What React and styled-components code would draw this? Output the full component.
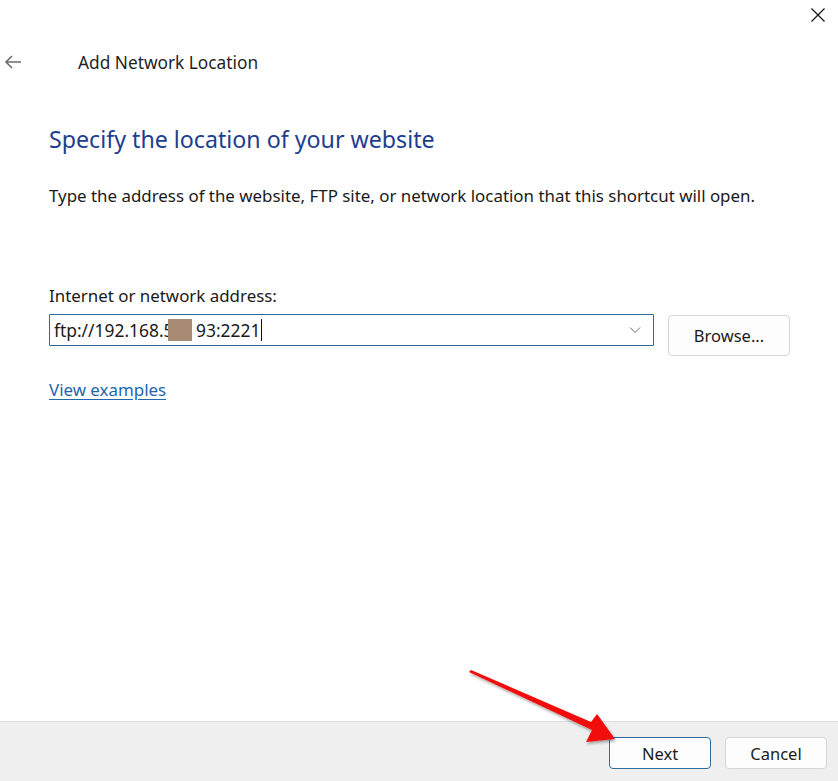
import React from "react";
import styled, { createGlobalStyle } from "styled-components";

const GlobalStyle = createGlobalStyle`
  html, body {
    margin: 0;
    padding: 0;
    background: #fff;
  }
  body {
    font-family: "Noto Sans", "Open Sans", sans-serif;
    color: #1a1a1a;
  }
`;

const Window = styled.div`
  position: relative;
  width: 838px;
  height: 781px;
  display: flex;
  flex-direction: column;
  background: #fff;
  overflow: hidden;
`;

const CaptionBar = styled.div`
  height: 30px;
  display: flex;
  justify-content: flex-end;
  align-items: flex-start;
`;

const CloseButton = styled.button`
  width: 46px;
  height: 30px;
  border: 0;
  background: transparent;
  display: flex;
  align-items: center;
  justify-content: center;
  padding: 0 0 0 6px;
  color: #1a1a1a;
`;

const Header = styled.div`
  display: flex;
  align-items: center;
  height: 64px;
`;

const BackButton = styled.button`
  width: 78px;
  height: 32px;
  border: 0;
  background: transparent;
  display: flex;
  align-items: center;
  padding: 0 0 0 4px;
  color: #6b6b6b;
`;

const HeaderTitle = styled.div`
  font-size: 17.3px;
  color: #1f1f1f;
`;

const Content = styled.div`
  flex: 1;
  padding: 28px 40px 0 49px;
  display: flex;
  flex-direction: column;
`;

const Heading = styled.h1`
  margin: 0;
  font-size: 23.2px;
  font-weight: 400;
  color: #1d3e8f;
  line-height: 34px;
`;

const Description = styled.p`
  margin: 28px 0 0;
  font-size: 16.9px;
  line-height: 24px;
  white-space: nowrap;
`;

const FieldLabel = styled.label`
  margin-top: 76px;
  font-size: 16.9px;
  line-height: 24px;
`;

const FieldRow = styled.div`
  margin-top: 6px;
  display: flex;
  align-items: flex-start;
  gap: 14px;
`;

const ComboBox = styled.div`
  width: 605px;
  height: 32px;
  box-sizing: border-box;
  border: 1px solid #2d6a98;
  border-radius: 1px;
  display: flex;
  align-items: center;
  padding: 0 12px 0 4px;
  font-size: 17.4px;
`;

const ComboText = styled.div`
  flex: 1;
  display: flex;
  align-items: center;
  white-space: pre;
`;

const Redaction = styled.span`
  display: inline-block;
  width: 24px;
  height: 22px;
  margin-left: -6px;
  background: #a88b73;
`;

const Caret = styled.span`
  display: inline-block;
  width: 1px;
  height: 22px;
  margin-left: 1px;
  background: #111;
`;

const PushButton = styled.button`
  width: ${(p) => p.$width || 102}px;
  height: ${(p) => p.$height || 32}px;
  box-sizing: border-box;
  background: #fdfdfd;
  border: 1px solid ${(p) => (p.$primary ? "#2f6e9c" : "#d6d6d6")};
  border-radius: 4px;
  font-family: inherit;
  font-size: 16.5px;
  color: #1b1b1b;
  padding: 0;
  margin-top: ${(p) => p.$offset || 0}px;
`;

const LinkText = styled.a`
  margin-top: 22px;
  align-self: flex-start;
  font-size: 16.9px;
  line-height: 24px;
  color: #2266b0;
  text-decoration: underline;
  text-underline-offset: 3px;
`;

const Footer = styled.div`
  height: 60px;
  box-sizing: border-box;
  background: #efefef;
  border-top: 1px solid #dcdcdc;
  display: flex;
  justify-content: flex-end;
  align-items: center;
  gap: 14px;
  padding: 3px 11px 0 0;
`;

const Annotation = styled.svg`
  position: absolute;
  left: 460px;
  top: 660px;
  pointer-events: none;
`;

export default function App() {
  return (
    <>
      <GlobalStyle />
      <Window>
        <CaptionBar>
          <CloseButton aria-label="Close">
            <svg width="16" height="16" viewBox="0 0 16 16">
              <path d="M1.5 1.5 L14.5 14.5 M14.5 1.5 L1.5 14.5" stroke="#1a1a1a" strokeWidth="1.3" />
            </svg>
          </CloseButton>
        </CaptionBar>
        <Header>
          <BackButton aria-label="Back">
            <svg width="18" height="16" viewBox="0 0 18 16">
              <path d="M17 8 H2 M8 2 L2 8 L8 14" stroke="#6e6e6e" strokeWidth="1.6" fill="none" />
            </svg>
          </BackButton>
          <HeaderTitle>Add Network Location</HeaderTitle>
        </Header>
        <Content>
          <Heading>Specify the location of your website</Heading>
          <Description>
            Type the address of the website, FTP site, or network location that this shortcut will open.
          </Description>
          <FieldLabel>Internet or network address:</FieldLabel>
          <FieldRow>
            <ComboBox>
              <ComboText>
                ftp://192.168.5<Redaction /> 93:2221<Caret />
              </ComboText>
              <svg width="12" height="8" viewBox="0 0 12 8">
                <path d="M1 1.5 L6 6.5 L11 1.5" stroke="#6a6a6a" strokeWidth="1" fill="none" />
              </svg>
            </ComboBox>
            <PushButton $width={122} $height={41} $offset={1}>
              Browse...
            </PushButton>
          </FieldRow>
          <LinkText href="#">View examples</LinkText>
        </Content>
        <Footer>
          <PushButton $primary>Next</PushButton>
          <PushButton>Cancel</PushButton>
        </Footer>
        <Annotation width="170" height="100" viewBox="0 0 170 100">
          <defs>
            <filter id="shade" x="-10%" y="-10%" width="130%" height="140%">
              <feDropShadow dx="1" dy="2" stdDeviation="1.5" floodColor="#000" floodOpacity="0.35" />
            </filter>
          </defs>
          <path
            d="M9 12 L11 10 L131 62 L137 54 L155 79 L126 82 L132 70 Z"
            fill="#f20d0d"
            filter="url(#shade)"
          />
        </Annotation>
      </Window>
    </>
  );
}
